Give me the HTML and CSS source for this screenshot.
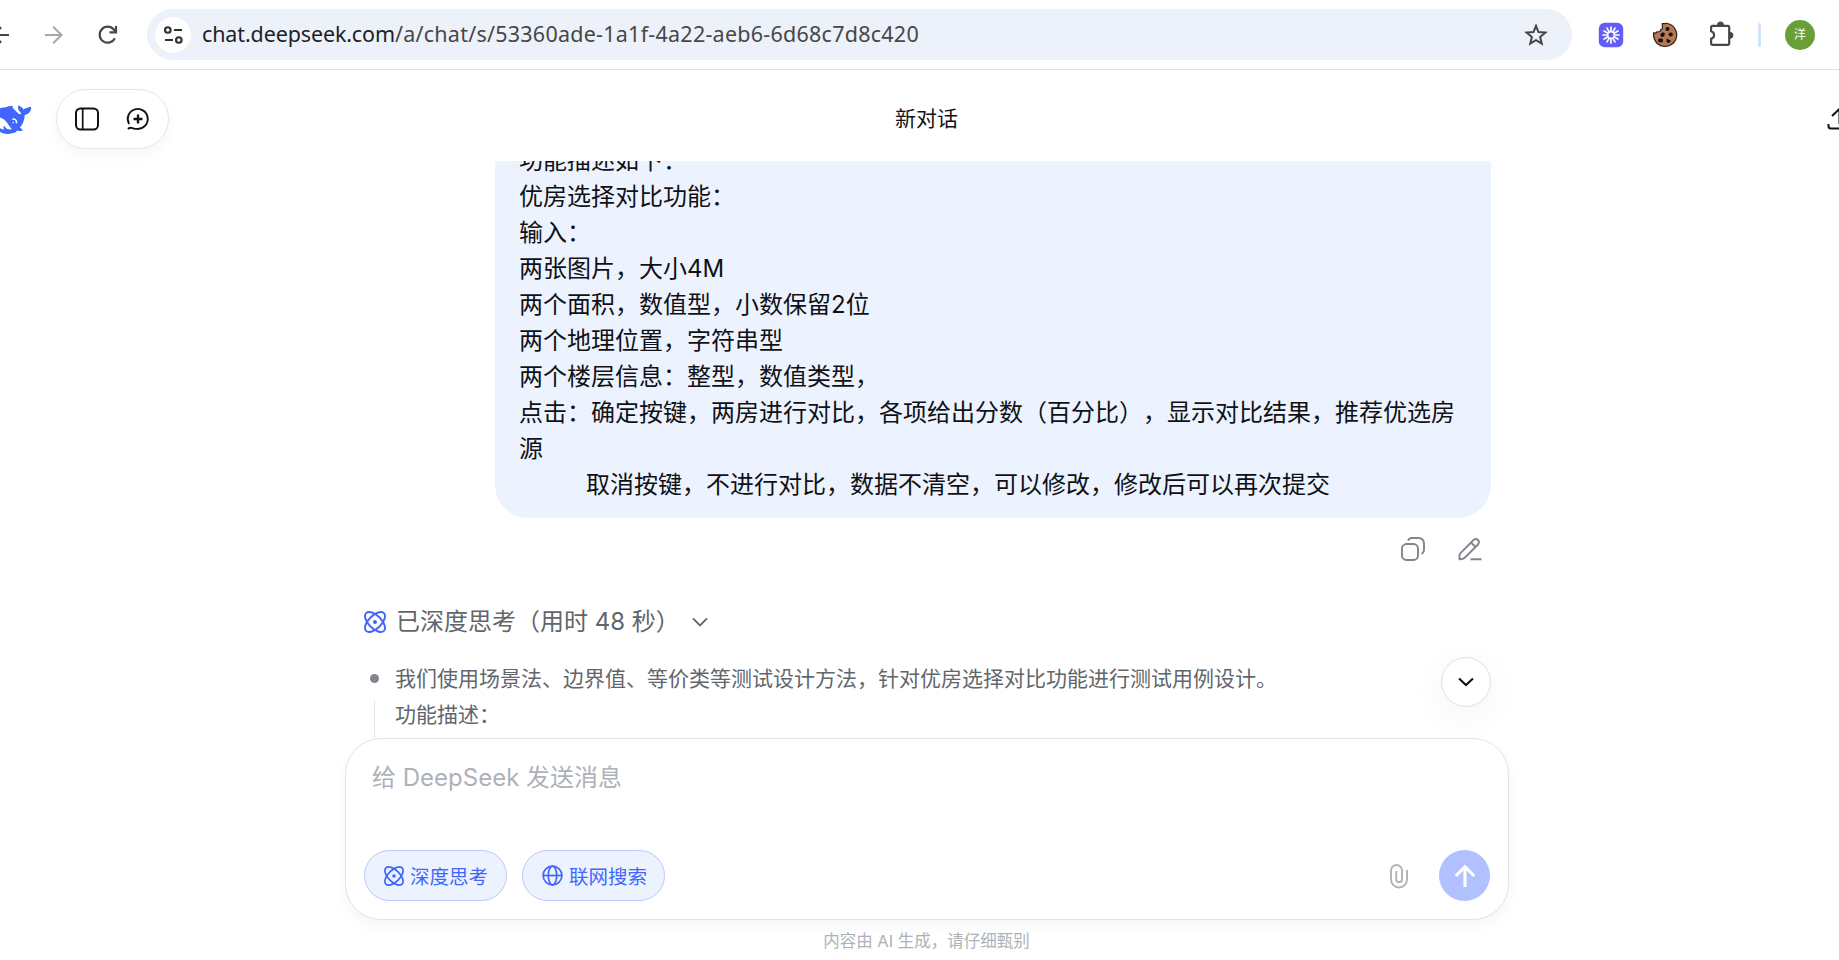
FILE: index.html
```html
<!DOCTYPE html>
<html lang="zh-CN">
<head>
<meta charset="utf-8">
<title>新对话 - DeepSeek</title>
<link rel="stylesheet" href="styles.css">
</head>
<body>
<svg class="defs" width="0" height="0">
  <symbol id="atom" viewBox="0 0 22 22">
    <g fill="none" stroke="currentColor" stroke-width="1.9">
      <ellipse cx="11" cy="11" rx="12.6" ry="6.4" transform="rotate(45 11 11)"/>
      <ellipse cx="11" cy="11" rx="12.6" ry="6.4" transform="rotate(-45 11 11)"/>
    </g>
    <circle cx="11" cy="11" r="2" fill="currentColor"/>
  </symbol>
</svg>
<header class="toolbar">
  <svg class="nav-back" width="14" height="20" viewBox="0 0 14 20" fill="none" stroke="#474747" stroke-width="2.1"><path d="M9 10H-8M1.2 2.2L-6.6 10l7.8 7.8"/></svg>
  <svg class="nav-forward" width="20" height="20" viewBox="0 0 20 20" fill="none" stroke="#a9a9a9" stroke-width="2.1"><path d="M1 10h16.5M9.2 1.7l8.3 8.3-8.3 8.3"/></svg>
  <svg class="nav-reload" width="20" height="20" viewBox="0 0 20 20" fill="none" stroke="#474747" stroke-width="2.2"><path d="M16.9 13.2A8 8 0 1 1 15.7 4.4L18 6.8M18 1v6.4h-6.5"/></svg>
  <div class="omnibox">
    <span class="site-info"><svg width="20" height="18" viewBox="0 0 20 18" fill="none" stroke="#303030" stroke-width="2.1"><circle cx="4.8" cy="4" r="2.8"/><path d="M11 4h8M2 14h8"/><circle cx="15.8" cy="14" r="2.8"/></svg></span>
    <span class="url"><b>chat.deepseek.com</b>/a/chat/s/53360ade-1a1f-4a22-aeb6-6d68c7d8c420</span>
    <svg class="star" width="24" height="24" viewBox="0 0 24 24" fill="none" stroke="#474747" stroke-width="2"><path d="M12 3l2.500 6.100 6.900.5-5.300 4.400 1.700 6.700L12 17.100l-5.800 3.600L7.900 14 2.600 9.600l6.900-.5z"/></svg>
  </div>
  <svg class="ext-loom" width="26" height="26" viewBox="0 0 26 26"><rect x=".8" y=".8" width="24.400" height="24.400" rx="6" fill="#625df5"/><g stroke="#fff" stroke-width="1.7" stroke-linecap="round"><path d="M13 5v16M5 13h16M9 6.070l8 13.860M17 6.070L9 19.930M6.070 9l13.860 8M19.930 9L6.070 17"/></g><circle cx="13" cy="13" r="3.300" fill="#625df5" stroke="#fff" stroke-width="1.500"/></svg>
  <svg class="ext-cookie" width="26" height="26" viewBox="0 0 26 26"><path d="M10.300 1.700c2 .1 3-.6 5.200-.2A11.600 11.600 0 1 1 1.700 10.700c1.200.7 2.600.1 3.300-.9 1.800.6 3.500-.4 3.800-2.200 1.700-.5 2-1.700 1.500-2.900z" fill="#b97852" stroke="#2e2420" stroke-width="1.200"/><g fill="#111"><circle cx="15.500" cy="7" r="2"/><path d="M8.200 12.500l2.500-2.200 2.200 1-.7 3-2.600.9z"/><circle cx="18.700" cy="12.500" r="2.100"/><rect x="6.200" y="16.400" width="4.600" height="3.900" rx="1"/><path d="M14.700 16.500l4.300 2.200-2 2.400-2.500-.8z"/></g></svg>
  <svg class="ext-puzzle" width="28" height="28" viewBox="0 0 28 28"><path d="M5.500 4.800h15.300a1.400 1.400 0 0 1 1.400 1.400v16.200a1.400 1.400 0 0 1-1.400 1.400H5.500a1.400 1.400 0 0 1-1.400-1.400v-4.500c4-1.200 4-6.400 0-7.600V6.200a1.400 1.400 0 0 1 1.400-1.400z" fill="none" stroke="#474747" stroke-width="2.200"/><path d="M10.500 3.900a3 3 0 0 1 6 0zM23 11.300a3 3 0 0 1 0 6z" fill="#474747" stroke="#474747"/></svg>
  <span class="divider"></span>
  <span class="avatar">洋</span>
</header>
<div class="app">
  <div class="topbar">
    <svg class="whale" width="32" height="32" viewBox="0 0 32 32"><path fill="#4066ff" d="M0 5.300C2 4.800 4 4.300 6 4.300 8.500 2.800 11 2.600 13.300 3.300c-1 .8-.8 1.600.2 2.400C16 8 17.500 10.500 20.300 11.300c.6.200 1-.2.800-.8C20 8.500 18 7 18 4.500l.5-2.300c.8.2 1 1 1.700 1.400 1.500.5 2.700 1.600 3.300 3.200 2-2.200 4.500-1.400 6-3l1.500.2c.3 4-2 7.200-6.200 7.900-.3 5-1.900 9.300-5 12.600l3.200 2.600c-1.500 1.500-4 1-6 .3l-1 1.600C12 31 5 32 0 29v-3.800l3.800 1.500c-.3-2-.3-3-.1-4.200l3 3.300c1.700.6 3.500.7 5.300.5C8 22 6.500 16.500 0 14.500z"/><path d="M12.300 16.500c1.300-1.300 3-.3 4 1.500.6 1 .4 1.700-.4 2.200M13 19.200l.5.800" fill="none" stroke="#fff" stroke-width="1.500"/></svg>
    <div class="pill">
      <svg width="26" height="24" viewBox="0 0 26 24" fill="none" stroke="#0f1115" stroke-width="2"><rect x="2" y="1.500" width="22" height="21" rx="4.500"/><path d="M8.700 1.500v21" stroke-width="1.700"/></svg>
      <svg width="24" height="24" viewBox="0 0 24 24" fill="none" stroke="#0f1115" stroke-width="1.900"><path d="M2.800 16.400A10 10 0 1 1 11 21.900H9.500C6.500 22.100 5 19.300 2.500 21.500" stroke-linecap="round"/><path d="M12 7.500v9M7.500 12h9" stroke-width="2.300"/></svg>
    </div>
    <h1 class="title">新对话</h1>
    <svg class="share" width="14" height="24" viewBox="0 0 14 24" fill="none" stroke="#0f1115" stroke-width="2"><path d="M5 9l8-7.500M12.500 2v15M1.500 17v2q0 2.500 2.500 2.500h11"/></svg>
  </div>
  <main class="thread">
    <div class="bubble">功能描述如下：
优房选择对比功能：
输入：
两张图片，大小4M
两个面积，数值型，小数保留2位
两个地理位置，字符串型
两个楼层信息：整型，数值类型，
点击：确定按键，两房进行对比，各项给出分数（百分比），显示对比结果，推荐优选房源
<span class="indent"></span>取消按键，不进行对比，数据不清空，可以修改，修改后可以再次提交</div>
    <div class="actions">
      <svg width="26" height="26" viewBox="0 0 26 26" fill="none" stroke="#81858c" stroke-width="1.900"><rect x="2" y="8" width="16" height="16" rx="4.500"/><path d="M8 4.500C9 2.500 10.500 2 12 2h6q6 0 6 6v5.500q0 3-2.500 4.500"/></svg>
      <svg width="26" height="26" viewBox="0 0 26 26" fill="none" stroke="#81858c" stroke-width="1.900"><path d="M2.500 23.300v-3.600q0-1.500 1-2.500L16.500 4q2.500-2 4.500 0t0 4.500L8 21.500q-1.800 1.800-5.500 1.800zM14 6.500l4.500 4.500M13.500 23.300h11"/></svg>
    </div>
    <div class="think-head">
      <svg width="22" height="22"><use href="#atom"/></svg>
      <span class="think-label">已深度思考（用时 48 秒）</span>
      <svg class="chev" width="16" height="10" viewBox="0 0 16 10" fill="none" stroke="#61666b" stroke-width="1.900"><path d="M1 1.300l7 7 7-7"/></svg>
    </div>
    <div class="think-body">
      <div class="rail"><i class="dot"></i><i class="line"></i></div>
      <p class="think-text">我们使用场景法、边界值、等价类等测试设计方法，针对优房选择对比功能进行测试用例设计。<br>功能描述：</p>
    </div>
    <button class="to-bottom"><svg width="16" height="10" viewBox="0 0 16 10" fill="none" stroke="#0f1115" stroke-width="2.100"><path d="M1 1.500l7 6.500 7-6.500"/></svg></button>
  </main>
  <section class="composer">
    <div class="placeholder">给 DeepSeek 发送消息</div>
    <div class="controls">
      <button class="chip"><svg width="20" height="20"><use href="#atom"/></svg>深度思考</button>
      <button class="chip"><svg width="21" height="21" viewBox="0 0 21 21" fill="none" stroke="currentColor" stroke-width="1.700"><circle cx="10.500" cy="10.500" r="9.400"/><ellipse cx="10.500" cy="10.500" rx="4.200" ry="9.400"/><path d="M1 10.500h19"/></svg>联网搜索</button>
      <svg class="clip" width="20" height="26" viewBox="0 0 20 26" fill="none" stroke="#b2b2b2" stroke-width="1.900"><path d="M18 7v9.500a8 8 0 0 1-16 0V7.500a5.500 5.500 0 0 1 11 0v8.800a2.900 2.900 0 0 1-5.800 0V8"/></svg>
      <button class="send"><svg width="22" height="24" viewBox="0 0 22 24" fill="none" stroke="#fff" stroke-width="3.100"><path d="M11 23V3M1.800 12L11 2.700l9.200 9.300"/></svg></button>
    </div>
  </section>
  <footer class="note">内容由 AI 生成，请仔细甄别</footer>
</div>
</body>
</html>
```
FILE: styles.css
```css
* { box-sizing: border-box; }
body {
  margin: 0;
  height: 960px;
  overflow: hidden;
  background: #fff;
  color: #0f1115;
  font-family: Inter, "Noto Sans CJK SC", sans-serif;
  text-spacing-trim: space-all;
}
.defs { position: absolute; }
svg { display: block; flex: none; overflow: visible; }
button { font: inherit; padding: 0; margin: 0; }

.toolbar {
  display: flex;
  align-items: center;
  height: 70px;
  border-bottom: 1px solid #dedfe0;
  background: #fff;
}
.nav-forward { margin-left: 30px; }
.nav-reload { margin-left: 34px; }
.omnibox {
  display: flex;
  align-items: center;
  width: 1425px;
  height: 51px;
  margin-left: 29px;
  padding: 0 24px 0 8px;
  border-radius: 26px;
  background: #ecf1fa;
}
.site-info {
  display: flex;
  align-items: center;
  justify-content: center;
  width: 36px;
  height: 36px;
  border-radius: 50%;
  background: #fff;
}
.url {
  flex: 1;
  margin-left: 11px;
  padding-bottom: 2px;
  font: 21.5px/30px "Noto Sans", sans-serif;
  letter-spacing: .25px;
  color: #474747;
  white-space: nowrap;
}
.url b { font-weight: 400; color: #1f1f1f; letter-spacing: -.13px; }
.ext-loom { margin-left: 26px; }
.ext-cookie { margin-left: 28px; }
.ext-puzzle { margin-left: 29px; }
.divider { width: 3px; height: 24px; margin-left: 23px; border-radius: 2px; background: #d3e3fd; }
.avatar {
  width: 30px;
  height: 30px;
  margin-left: 24px;
  border-radius: 50%;
  background: #689f38;
  color: #fff;
  font-size: 12px;
  line-height: 30px;
  text-align: center;
}

.app { display: flex; flex-direction: column; width: 1853px; height: 890px; }
.topbar { display: flex; align-items: center; height: 91px; padding-top: 7px; }
.pill {
  display: flex;
  align-items: center;
  gap: 26px;
  width: 113px;
  height: 60px;
  margin-left: 24px;
  padding-left: 17px;
  border: 1px solid #e4e5e7;
  border-radius: 30px;
  box-shadow: 0 6px 15px rgba(0, 0, 0, .04);
}
.title {
  flex: 1;
  margin: 0;
  padding-right: 171px;
  font-size: 21px;
  font-weight: 400;
  line-height: 30px;
  text-align: center;
}
.share { margin-right: 12px; margin-left: -28px; }

.thread { position: relative; height: 577px; overflow: hidden; }
.bubble {
  width: 996px;
  margin: -18px 0 0 495px;
  padding: 0 24px 15px;
  border-radius: 0 0 33px 33px;
  background: #edf3fe;
  font-size: 24px;
  line-height: 36px;
  white-space: pre-wrap;
}
.indent { display: inline-block; width: 67px; }
.actions { display: flex; gap: 31px; margin: 18px 0 0 1400px; }
.think-head { display: flex; align-items: center; height: 36px; margin: 42px 0 0 364px; color: #4166ff; }
.think-label { margin-left: 10px; font-size: 24px; line-height: 36px; color: #61666b; }
.chev { margin-left: 12px; }
.think-body { display: flex; margin: 21px 0 0 370px; }
.rail { display: flex; flex-direction: column; align-items: center; width: 9px; }
.dot { width: 9px; height: 9px; margin-top: 13px; border-radius: 50%; background: #81858c; }
.line { width: 1px; height: 40px; margin-top: 17px; background: #e1e4ea; }
.think-text { margin: 0 0 0 16px; font-size: 21px; line-height: 36px; color: #61666b; white-space: nowrap; }
.to-bottom {
  position: absolute;
  left: 1441px;
  top: 496px;
  display: flex;
  align-items: center;
  justify-content: center;
  width: 50px;
  height: 50px;
  border: 1px solid #e0e0e0;
  border-radius: 50%;
  background: #fff;
  box-shadow: 0 9px 36px rgba(0, 0, 0, .05);
}
.composer {
  position: relative;
  width: 1164px;
  height: 182px;
  margin-left: 345px;
  padding: 21px 18px 17px;
  border: 1px solid #e2e3e4;
  border-radius: 36px;
  background: #fff;
  box-shadow: 0 6px 15px rgba(0, 0, 0, .04);
}
.placeholder { padding-left: 8px; font-size: 24px; line-height: 36px; color: #adb2b8; }
.controls { display: flex; align-items: center; margin-top: 54px; }
.chip {
  display: flex;
  align-items: center;
  gap: 6px;
  width: 143px;
  height: 51px;
  margin-right: 15px;
  padding-left: 19px;
  border: 1px solid #b8c8ff;
  border-radius: 26px;
  background: #edf3fe;
  color: #4166ff;
  font-size: 19.5px;
  white-space: nowrap;
}
.clip { margin-left: auto; }
.send {
  display: flex;
  align-items: center;
  justify-content: center;
  width: 51px;
  height: 51px;
  margin-left: 30px;
  border: 0;
  border-radius: 50%;
  background: #b1c1ff;
}
.note { margin-top: 9px; font-size: 16.5px; line-height: 24px; text-align: center; color: #adb2b8; }
```
